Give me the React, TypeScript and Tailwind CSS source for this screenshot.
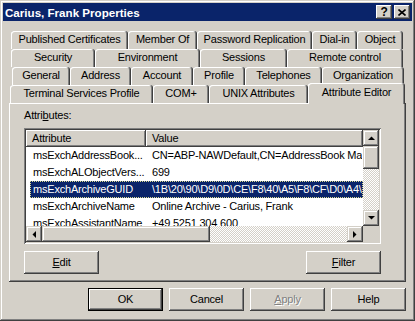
import React from "react";

const FONT = "font-['Liberation_Sans',Arial,sans-serif]";
const RAISED =
  "shadow-[inset_-1px_-1px_0_#404040,inset_1px_1px_0_#ffffff,inset_-2px_-2px_0_#808080]";
const SCROLLBTN =
  "shadow-[inset_-1px_-1px_0_#404040,inset_1px_1px_0_#d4d0c8,inset_-2px_-2px_0_#808080,inset_2px_2px_0_#ffffff]";
const TABSH =
  "shadow-[inset_-1px_0_0_#404040,inset_1px_1px_0_#ffffff,inset_-2px_0_0_#808080]";
const CHECKER =
  "bg-[repeating-conic-gradient(#d4d0c8_0%_25%,#ffffff_0%_50%)] bg-[length:2px_2px]";

type T = { label: string; w: string };

const rows: { ml: string; tabs: T[] }[] = [
  {
    ml: "ml-[2px]",
    tabs: [
      { label: "Published Certificates", w: "w-[117px]" },
      { label: "Member Of", w: "w-[69px]" },
      { label: "Password Replication", w: "w-[115px]" },
      { label: "Dial-in", w: "w-[45px]" },
      { label: "Object", w: "w-[46px]" },
    ],
  },
  {
    ml: "ml-[2px]",
    tabs: [
      { label: "Security", w: "w-[84px]" },
      { label: "Environment", w: "w-[105px]" },
      { label: "Sessions", w: "w-[87px]" },
      { label: "Remote control", w: "w-[116px]" },
    ],
  },
  {
    ml: "ml-[3px]",
    tabs: [
      { label: "General", w: "w-[58px]" },
      { label: "Address", w: "w-[61px]" },
      { label: "Account", w: "w-[62px]" },
      { label: "Profile", w: "w-[52px]" },
      { label: "Telephones", w: "w-[77px]" },
      { label: "Organization", w: "w-[82px]" },
    ],
  },
];

function Tab({ label, w }: T) {
  return (
    <div
      className={`${w} ${TABSH} h-[18px] shrink-0 rounded-t-[3px] bg-[#d4d0c8] flex items-center justify-center pb-[1px] whitespace-nowrap`}
    >
      {label}
    </div>
  );
}

function Arrow({ dir }: { dir: "up" | "down" | "left" | "right" }) {
  const horiz = dir === "left" || dir === "right";
  const pts =
    dir === "up"
      ? "0,4 7,4 3.5,0.5"
      : dir === "down"
      ? "0,0 7,0 3.5,3.5"
      : dir === "left"
      ? "4,0 4,7 0.5,3.5"
      : "0,0 0,7 3.5,3.5";
  return (
    <svg width={horiz ? 4 : 7} height={horiz ? 7 : 4} viewBox={horiz ? "0 0 4 7" : "0 0 7 4"}>
      <polygon points={pts} fill="#000" />
    </svg>
  );
}

function ScrollBtn({ dir }: { dir: "up" | "down" | "left" | "right" }) {
  return (
    <div className={`${SCROLLBTN} w-[16px] h-[16px] shrink-0 bg-[#d4d0c8] flex items-center justify-center`}>
      <Arrow dir={dir} />
    </div>
  );
}

const data = [
  { a: "msExchAddressBook...", v: "CN=ABP-NAWDefault,CN=AddressBook Mailboxes,CN=Address Lists" },
  { a: "msExchALObjectVers...", v: "699" },
  {
    a: "msExchArchiveGUID",
    v: "\\1B\\20\\90\\D9\\0D\\CE\\F8\\40\\A5\\F8\\CF\\D0\\A4\\B2\\8C\\11",
    sel: true,
  },
  { a: "msExchArchiveName", v: "Online Archive - Carius, Frank" },
  { a: "msExchAssistantName", v: "+49 5251 304 600" },
];

function Button({ children, cls = "" }: { children: React.ReactNode; cls?: string }) {
  return (
    <div className={`${RAISED} w-[75px] h-[23px] bg-[#d4d0c8] flex items-center justify-center ${cls}`}>
      {children}
    </div>
  );
}

export default function App() {
  return (
    <div
      className={`${FONT} text-[11px] leading-[13px] tracking-[-0.2px] text-black w-[415px] h-[321px] bg-[#d4d0c8] shadow-[inset_-1px_-1px_0_#404040,inset_1px_1px_0_#d4d0c8,inset_-2px_-2px_0_#808080,inset_2px_2px_0_#ffffff] p-[3px] flex flex-col overflow-hidden`}
    >
      {/* Title bar */}
      <div className="h-[18px] bg-[#0a246a] flex items-center justify-between pl-[2px] pr-[2px]">
        <span className="font-bold text-white text-[11.6px] tracking-normal">Carius, Frank Properties</span>
        <div className="flex gap-[2px]">
          <div className={`${RAISED} w-[16px] h-[14px] bg-[#d4d0c8] flex items-center justify-center font-bold text-[12px] leading-none`}>
            ?
          </div>
          <div className={`${RAISED} w-[16px] h-[14px] bg-[#d4d0c8] flex items-center justify-center`}>
            <svg width="8" height="7" viewBox="0 0 8 7">
              <path d="M0.5 0.5 L7.5 6.5 M7.5 0.5 L0.5 6.5" stroke="#000" strokeWidth="1.6" />
            </svg>
          </div>
        </div>
      </div>

      {/* Body */}
      <div className="px-[6px] pt-[10px] flex flex-col">
        {rows.map((r, i) => (
          <div key={i} className={`${r.ml} flex h-[18px]`}>
            {r.tabs.map((t) => (
              <Tab key={t.label} {...t} />
            ))}
          </div>
        ))}
        <div className="ml-[1px] flex h-[18px] items-end">
          <Tab label="Terminal Services Profile" w="w-[143px]" />
          <Tab label="COM+" w="w-[56px]" />
          <Tab label="UNIX Attributes" w="w-[99px]" />
          <div
            className={`${TABSH} relative z-10 w-[97px] h-[21px] -mb-[1px] shrink-0 rounded-t-[3px] bg-[#d4d0c8] flex justify-center pt-[3px] whitespace-nowrap`}
          >
            Attribute Editor
          </div>
        </div>

        {/* Panel */}
        <div className="h-[179px] bg-[#d4d0c8] shadow-[inset_-1px_-1px_0_#404040,inset_1px_1px_0_#ffffff,inset_-2px_-2px_0_#808080] pt-[6px] pl-[15px] flex flex-col">
          <div className="h-[13px]">
            Attri<span className="underline">b</span>utes:
          </div>
          <div className="mt-[6px] w-[357px] h-[116px] bg-white shadow-[inset_1px_1px_0_#808080,inset_-1px_-1px_0_#ffffff,inset_2px_2px_0_#404040,inset_-2px_-2px_0_#d4d0c8] p-[2px] flex">
            <div className="w-[337px] flex flex-col">
              <div className="flex h-[17px] shrink-0">
                <div className={`${RAISED} w-[120px] bg-[#d4d0c8] pl-[6px] flex items-center`}>Attribute</div>
                <div className={`${RAISED} flex-1 bg-[#d4d0c8] pl-[6px] flex items-center`}>Value</div>
              </div>
              <div className="h-[79px] overflow-hidden">
                {data.map((d) => (
                  <div key={d.a} className="h-[17px] flex">
                    <div
                      className={`ml-[4px] flex-1 flex whitespace-nowrap overflow-hidden ${
                        d.sel ? "bg-[#0a246a] text-white border border-dotted border-[#d8d890]" : "border border-transparent"
                      }`}
                    >
                      <div className="w-[115px] shrink-0 pl-[2px] flex items-center">{d.a}</div>
                      <div className="pl-[6px] flex items-center">{d.v}</div>
                    </div>
                  </div>
                ))}
              </div>
              <div className="h-[16px] flex">
                <ScrollBtn dir="left" />
                <div className={`${SCROLLBTN} w-[168px] bg-[#d4d0c8]`} />
                <div className={`flex-1 ${CHECKER}`} />
                <ScrollBtn dir="right" />
              </div>
            </div>
            <div className="w-[16px] flex flex-col">
              <ScrollBtn dir="up" />
              <div className={`${SCROLLBTN} h-[23px] bg-[#d4d0c8]`} />
              <div className={`flex-1 ${CHECKER}`} />
              <ScrollBtn dir="down" />
              <div className="h-[16px] bg-[#d4d0c8]" />
            </div>
          </div>
          <div className="mt-[7px] w-[357px] flex justify-between">
            <Button>
              <span className="underline">E</span>dit
            </Button>
            <Button>
              <span className="underline">F</span>ilter
            </Button>
          </div>
        </div>

        {/* Bottom buttons */}
        <div className="mt-[6px] flex justify-end gap-[6px]">
          <div className="w-[75px] h-[23px] bg-[#d4d0c8] shadow-[inset_0_0_0_1px_#000000,inset_-2px_-2px_0_#404040,inset_2px_2px_0_#ffffff,inset_-3px_-3px_0_#808080] flex items-center justify-center">
            OK
          </div>
          <Button>Cancel</Button>
          <Button cls="text-[#808080] [text-shadow:1px_1px_0_#ffffff]">
            <span className="underline">A</span>pply
          </Button>
          <Button>Help</Button>
        </div>
      </div>
    </div>
  );
}
